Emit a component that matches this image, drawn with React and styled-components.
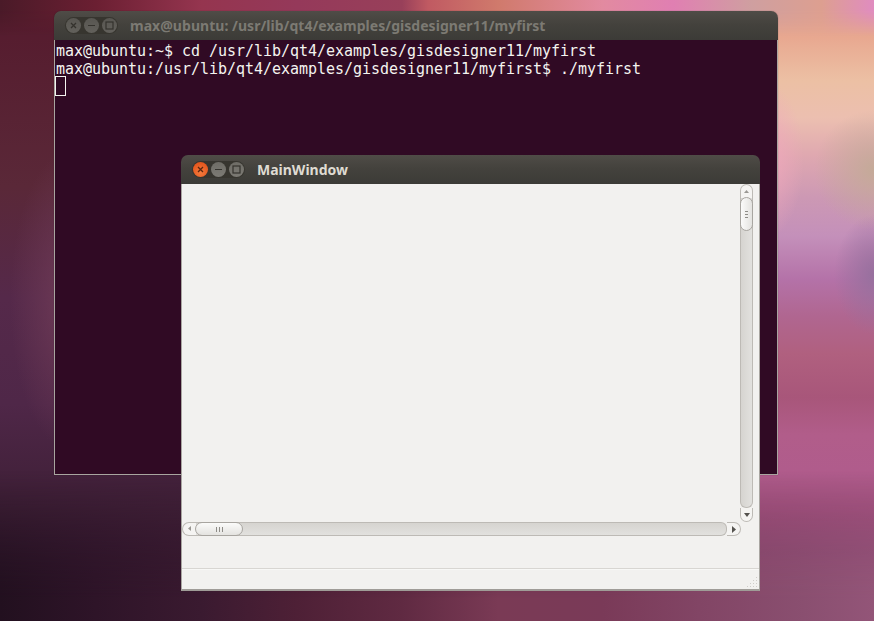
import React from "react";
import styled, { createGlobalStyle } from "styled-components";

const Global = createGlobalStyle`
  html, body { margin: 0; padding: 0; background: #3a1a34; }
  #root { width: 874px; height: 621px; overflow: hidden; }
`;

const Desktop = styled.div`
  position: relative;
  width: 874px;
  height: 621px;
  overflow: hidden;
  background:
    radial-gradient(ellipse 60px 150px at 70px 300px, #6e3a56 0%, rgba(110,58,86,0) 100%),
    linear-gradient(180deg, #551a2d 0%, #5a2838 30%, #55294a 48%, #4f2748 65%, #3e1f36 82%, #261024 100%);
`;

const RightGlow = styled.div`
  position: absolute;
  top: 0;
  right: 0;
  width: 420px;
  height: 100%;
  -webkit-mask-image: linear-gradient(90deg, transparent 0%, #000 70%);
  mask-image: linear-gradient(90deg, transparent 0%, #000 70%);
  background:
    radial-gradient(ellipse 40px 60px at 420px 275px, #97709e 0%, rgba(151,112,158,0) 100%),
    radial-gradient(ellipse 60px 60px at 420px 170px, #c4aa98 0%, rgba(196,170,152,0) 100%),
    radial-gradient(ellipse 40px 80px at 310px 160px, #f0a8bc 0%, rgba(240,168,188,0) 100%),
    linear-gradient(180deg, #dd9f92 0%, #e8a890 6%, #ecc0a4 13%, #ecbfb0 19%, #dfa8b0 25%, #cc98b4 32%, #c490ba 38%, #b472a8 45%, #b06690 51%, #b0607f 57%, #a8567a 64%, #b15d8a 70%, #b05c8c 76%, #9c4a78 83%, #8c4470 89%, #905074 96%);
`;

const TopGlow = styled.div`
  position: absolute;
  top: 0;
  left: 0;
  width: 100%;
  height: 36px;
  -webkit-mask-image: linear-gradient(180deg, #000 30%, transparent 100%);
  mask-image: linear-gradient(180deg, #000 30%, transparent 100%);
  background: linear-gradient(90deg, #4a1a28 0%, #6b1f32 11%, #95354f 23%, #95395a 34%, #98405a 46%, #c05a62 49%, #d07a6c 57%, #e28aa0 69%, #e07fb2 77%, #cf9fa0 86%, #dd9f90 94%, #e08cc0 100%);
`;

const BottomGlow = styled.div`
  position: absolute;
  bottom: 0;
  left: 0;
  width: 100%;
  height: 150px;
  -webkit-mask-image: linear-gradient(0deg, #000 15%, transparent 100%);
  mask-image: linear-gradient(0deg, #000 15%, transparent 100%);
  background: linear-gradient(90deg, #22101f 0%, #2e1428 11%, #3a1a30 23%, #4e2036 34%, #602a42 46%, #7a3a55 57%, #7a3a58 69%, #824565 80%, #8a4f70 92%, #935578 100%);
`;

const TerminalWindow = styled.section`
  position: absolute;
  left: 54px;
  top: 11px;
  width: 724px;
  height: 464px;
  display: flex;
  flex-direction: column;
  border-radius: 7px 7px 0 0;
  overflow: hidden;
  box-shadow: 0 0 1px rgba(0,0,0,0.5);
`;

const AppWindow = styled.section`
  position: absolute;
  left: 181px;
  top: 155px;
  width: 579px;
  height: 436px;
  display: flex;
  flex-direction: column;
  border-radius: 7px 7px 0 0;
  overflow: hidden;
`;

const TitleBar = styled.header`
  flex: 0 0 29px;
  height: 29px;
  display: flex;
  align-items: center;
  box-sizing: border-box;
  padding-left: 11px;
  background: linear-gradient(180deg, #4f4c47 0%, #44423d 45%, #3c3b37 100%);
`;

const ButtonGroup = styled.div`
  display: flex;
  align-items: center;
  gap: 3px;
  padding: 1px;
  border-radius: 10px;
  background: #37352f;
`;

const WinButton = styled.button`
  width: 15px;
  height: 15px;
  padding: 0;
  border: 0;
  border-radius: 50%;
  display: flex;
  align-items: center;
  justify-content: center;
  background: ${(p) =>
    p.$close
      ? "radial-gradient(circle at 50% 70%, #f47a3c 0%, #e5581f 70%, #d84f1d 100%)"
      : p.$active
      ? "linear-gradient(180deg, #6e6c66 0%, #7c7a74 100%)"
      : "linear-gradient(180deg, #585651 0%, #62605b 100%)"};
  color: ${(p) => (p.$close ? "#5a2610" : p.$active ? "#35332e" : "#34322d")};
`;

const Title = styled.h1`
  margin: 0 0 0 12px;
  font: 700 14px "Noto Sans", "Open Sans", sans-serif;
  letter-spacing: ${(p) => (p.$active ? "0" : "0.04px")};
  color: ${(p) => (p.$active ? "#dfdbd2" : "#7c7a73")};
  white-space: nowrap;
`;

const TerminalBody = styled.div`
  flex: 1;
  box-sizing: border-box;
  background: #300a24;
  border: 1px solid #a9a5a0;
  border-top: 0;
  padding: 0 0 0 1px;
  font: 15px/18px "DejaVu Sans Mono", monospace;
  letter-spacing: -0.03px;
  color: #f4f4f0;
`;

const TermLine = styled.div`
  height: 18px;
  white-space: pre;
  &:first-child { margin-top: 2px; }
`;

const Cursor = styled.div`
  width: 11px;
  height: 20px;
  margin-top: -2px;
  margin-left: -1px;
  box-sizing: border-box;
  border: 1px solid #f4f4f0;
`;

const AppBody = styled.div`
  flex: 1;
  display: flex;
  flex-direction: column;
  box-sizing: border-box;
  background: #f2f1ef;
  border: 1px solid #a9a6a1;
  border-top: 0;
  border-bottom: 2px solid #9f9c97;
  min-height: 0;
`;

const ScrollRow = styled.div`
  flex: 0 0 338px;
  display: flex;
  padding-right: 6px;
`;

const Canvas = styled.div`
  flex: 1;
`;

const VScroll = styled.div`
  width: 13px;
  display: flex;
  flex-direction: column;
  box-sizing: border-box;
`;

const HScrollRow = styled.div`
  flex: 0 0 14px;
  display: flex;
  padding-right: 18px;
`;

const HScroll = styled.div`
  flex: 1;
  display: flex;
`;

const Stepper = styled.div`
  display: flex;
  align-items: center;
  justify-content: center;
  box-sizing: border-box;
  background: #f5f4f2;
  border: 1px solid #bdbab5;
  ${(p) => p.$pos === "top" && "height: 14px; border-radius: 7px 7px 0 0; border-bottom: 0;"}
  ${(p) => p.$pos === "bottom" && "height: 14px; border-radius: 0 0 7px 7px; border-top: 0;"}
  ${(p) => p.$pos === "left" && "width: 14px; border-radius: 7px 0 0 7px; border-right: 0;"}
  ${(p) => p.$pos === "right" && "width: 14px; border-radius: 0 7px 7px 0; border-left: 0;"}
`;

const VTrack = styled.div`
  flex: 1;
  display: flex;
  flex-direction: column;
  box-sizing: border-box;
  background: linear-gradient(90deg, #d6d4d0, #e2e1de);
  border: 1px solid #bdbab5;
  border-top: 0;
  border-bottom-left-radius: 6px;
  border-bottom-right-radius: 6px;
`;

const HTrack = styled.div`
  flex: 1;
  display: flex;
  box-sizing: border-box;
  background: linear-gradient(180deg, #d6d4d0, #e2e1de);
  border: 1px solid #bdbab5;
  border-left: 0;
  border-top-right-radius: 6px;
  border-bottom-right-radius: 6px;
`;

const VThumb = styled.div`
  height: 34px;
  margin: -1px;
  box-sizing: border-box;
  display: flex;
  align-items: center;
  justify-content: center;
  border: 1px solid #a8a5a0;
  border-radius: 7px;
  background: linear-gradient(90deg, #fbfbfa, #e4e3e0);
`;

const HThumb = styled.div`
  width: 48px;
  margin: -1px 0 -1px -1px;
  box-sizing: border-box;
  display: flex;
  align-items: center;
  justify-content: center;
  border: 1px solid #a8a5a0;
  border-radius: 7px;
  background: linear-gradient(180deg, #fbfbfa, #e4e3e0);
`;

const Spacer = styled.div`
  flex: 1;
`;

const StatusBar = styled.footer`
  flex: 0 0 20px;
  display: flex;
  justify-content: flex-end;
  align-items: flex-end;
  border-top: 1px solid #d8d6d2;
  box-shadow: inset 0 1px 0 #f8f8f6;
`;

const Cross = () => (
  <svg width="7" height="7" viewBox="0 0 7 7"><path d="M1 1l5 5M6 1L1 6" stroke="currentColor" strokeWidth="1.3" /></svg>
);
const Minus = () => (
  <svg width="9" height="3" viewBox="0 0 9 3"><path d="M1 1.5h7" stroke="currentColor" strokeWidth="1.2" /></svg>
);
const Square = () => (
  <svg width="9" height="9" viewBox="0 0 9 9"><rect x="1" y="1" width="7" height="7" fill="none" stroke="currentColor" strokeWidth="1.2" /></svg>
);

const Arrow = ({ dir, color = "#55534e" }) => {
  const pts = {
    up: "0,5 5,5 2.5,2",
    down: "0,2 6,2 3,6",
    left: "4,0 4,5 1,2.5",
    right: "1,0 1,7 5,3.5",
  }[dir];
  return (
    <svg width="6" height="7" viewBox="0 0 6 7"><polygon points={pts} fill={color} /></svg>
  );
};

const GripV = () => (
  <svg width="3" height="9" viewBox="0 0 3 9">
    <path d="M0 1.5h3M0 4.5h3M0 7.5h3" stroke="#8e8c87" strokeWidth="1" />
  </svg>
);
const GripH = () => (
  <svg width="9" height="5" viewBox="0 0 9 5">
    <path d="M1.5 0v5M4.5 0v5M7.5 0v5" stroke="#8e8c87" strokeWidth="1" />
  </svg>
);
const Resize = () => {
  const dots = [[10,1],[7,4],[10,4],[4,7],[7,7],[10,7],[1,10],[4,10],[7,10],[10,10]];
  return (
    <svg width="12" height="12" viewBox="0 0 12 12" style={{ marginRight: 1, marginBottom: 1 }}>
      {dots.map(([x, y]) => <rect key={x + "-" + y} x={x} y={y} width="1" height="1" fill="#cfcdc9" />)}
    </svg>
  );
};

const Buttons = ({ active }) => (
  <ButtonGroup>
    <WinButton $close={active} $active={active}><Cross /></WinButton>
    <WinButton $active={active}><Minus /></WinButton>
    <WinButton $active={active}><Square /></WinButton>
  </ButtonGroup>
);

export default function App() {
  return (
    <Desktop>
      <Global />
      <RightGlow />
      <TopGlow />
      <BottomGlow />
      <TerminalWindow>
        <TitleBar>
          <Buttons />
          <Title>max@ubuntu: /usr/lib/qt4/examples/gisdesigner11/myfirst</Title>
        </TitleBar>
        <TerminalBody>
          <TermLine>max@ubuntu:~$ cd /usr/lib/qt4/examples/gisdesigner11/myfirst</TermLine>
          <TermLine>max@ubuntu:/usr/lib/qt4/examples/gisdesigner11/myfirst$ ./myfirst</TermLine>
          <Cursor />
        </TerminalBody>
      </TerminalWindow>
      <AppWindow>
        <TitleBar>
          <Buttons active />
          <Title $active>MainWindow</Title>
        </TitleBar>
        <AppBody>
          <ScrollRow>
            <Canvas />
            <VScroll>
              <Stepper $pos="top"><Arrow dir="up" color="#9a9893" /></Stepper>
              <VTrack>
                <VThumb><GripV /></VThumb>
                <Spacer />
              </VTrack>
              <Stepper $pos="bottom"><Arrow dir="down" /></Stepper>
            </VScroll>
          </ScrollRow>
          <HScrollRow>
            <HScroll>
              <Stepper $pos="left"><Arrow dir="left" color="#9a9893" /></Stepper>
              <HTrack>
                <HThumb><GripH /></HThumb>
                <Spacer />
              </HTrack>
              <Stepper $pos="right"><Arrow dir="right" /></Stepper>
            </HScroll>
          </HScrollRow>
          <Spacer />
          <StatusBar><Resize /></StatusBar>
        </AppBody>
      </AppWindow>
    </Desktop>
  );
}
